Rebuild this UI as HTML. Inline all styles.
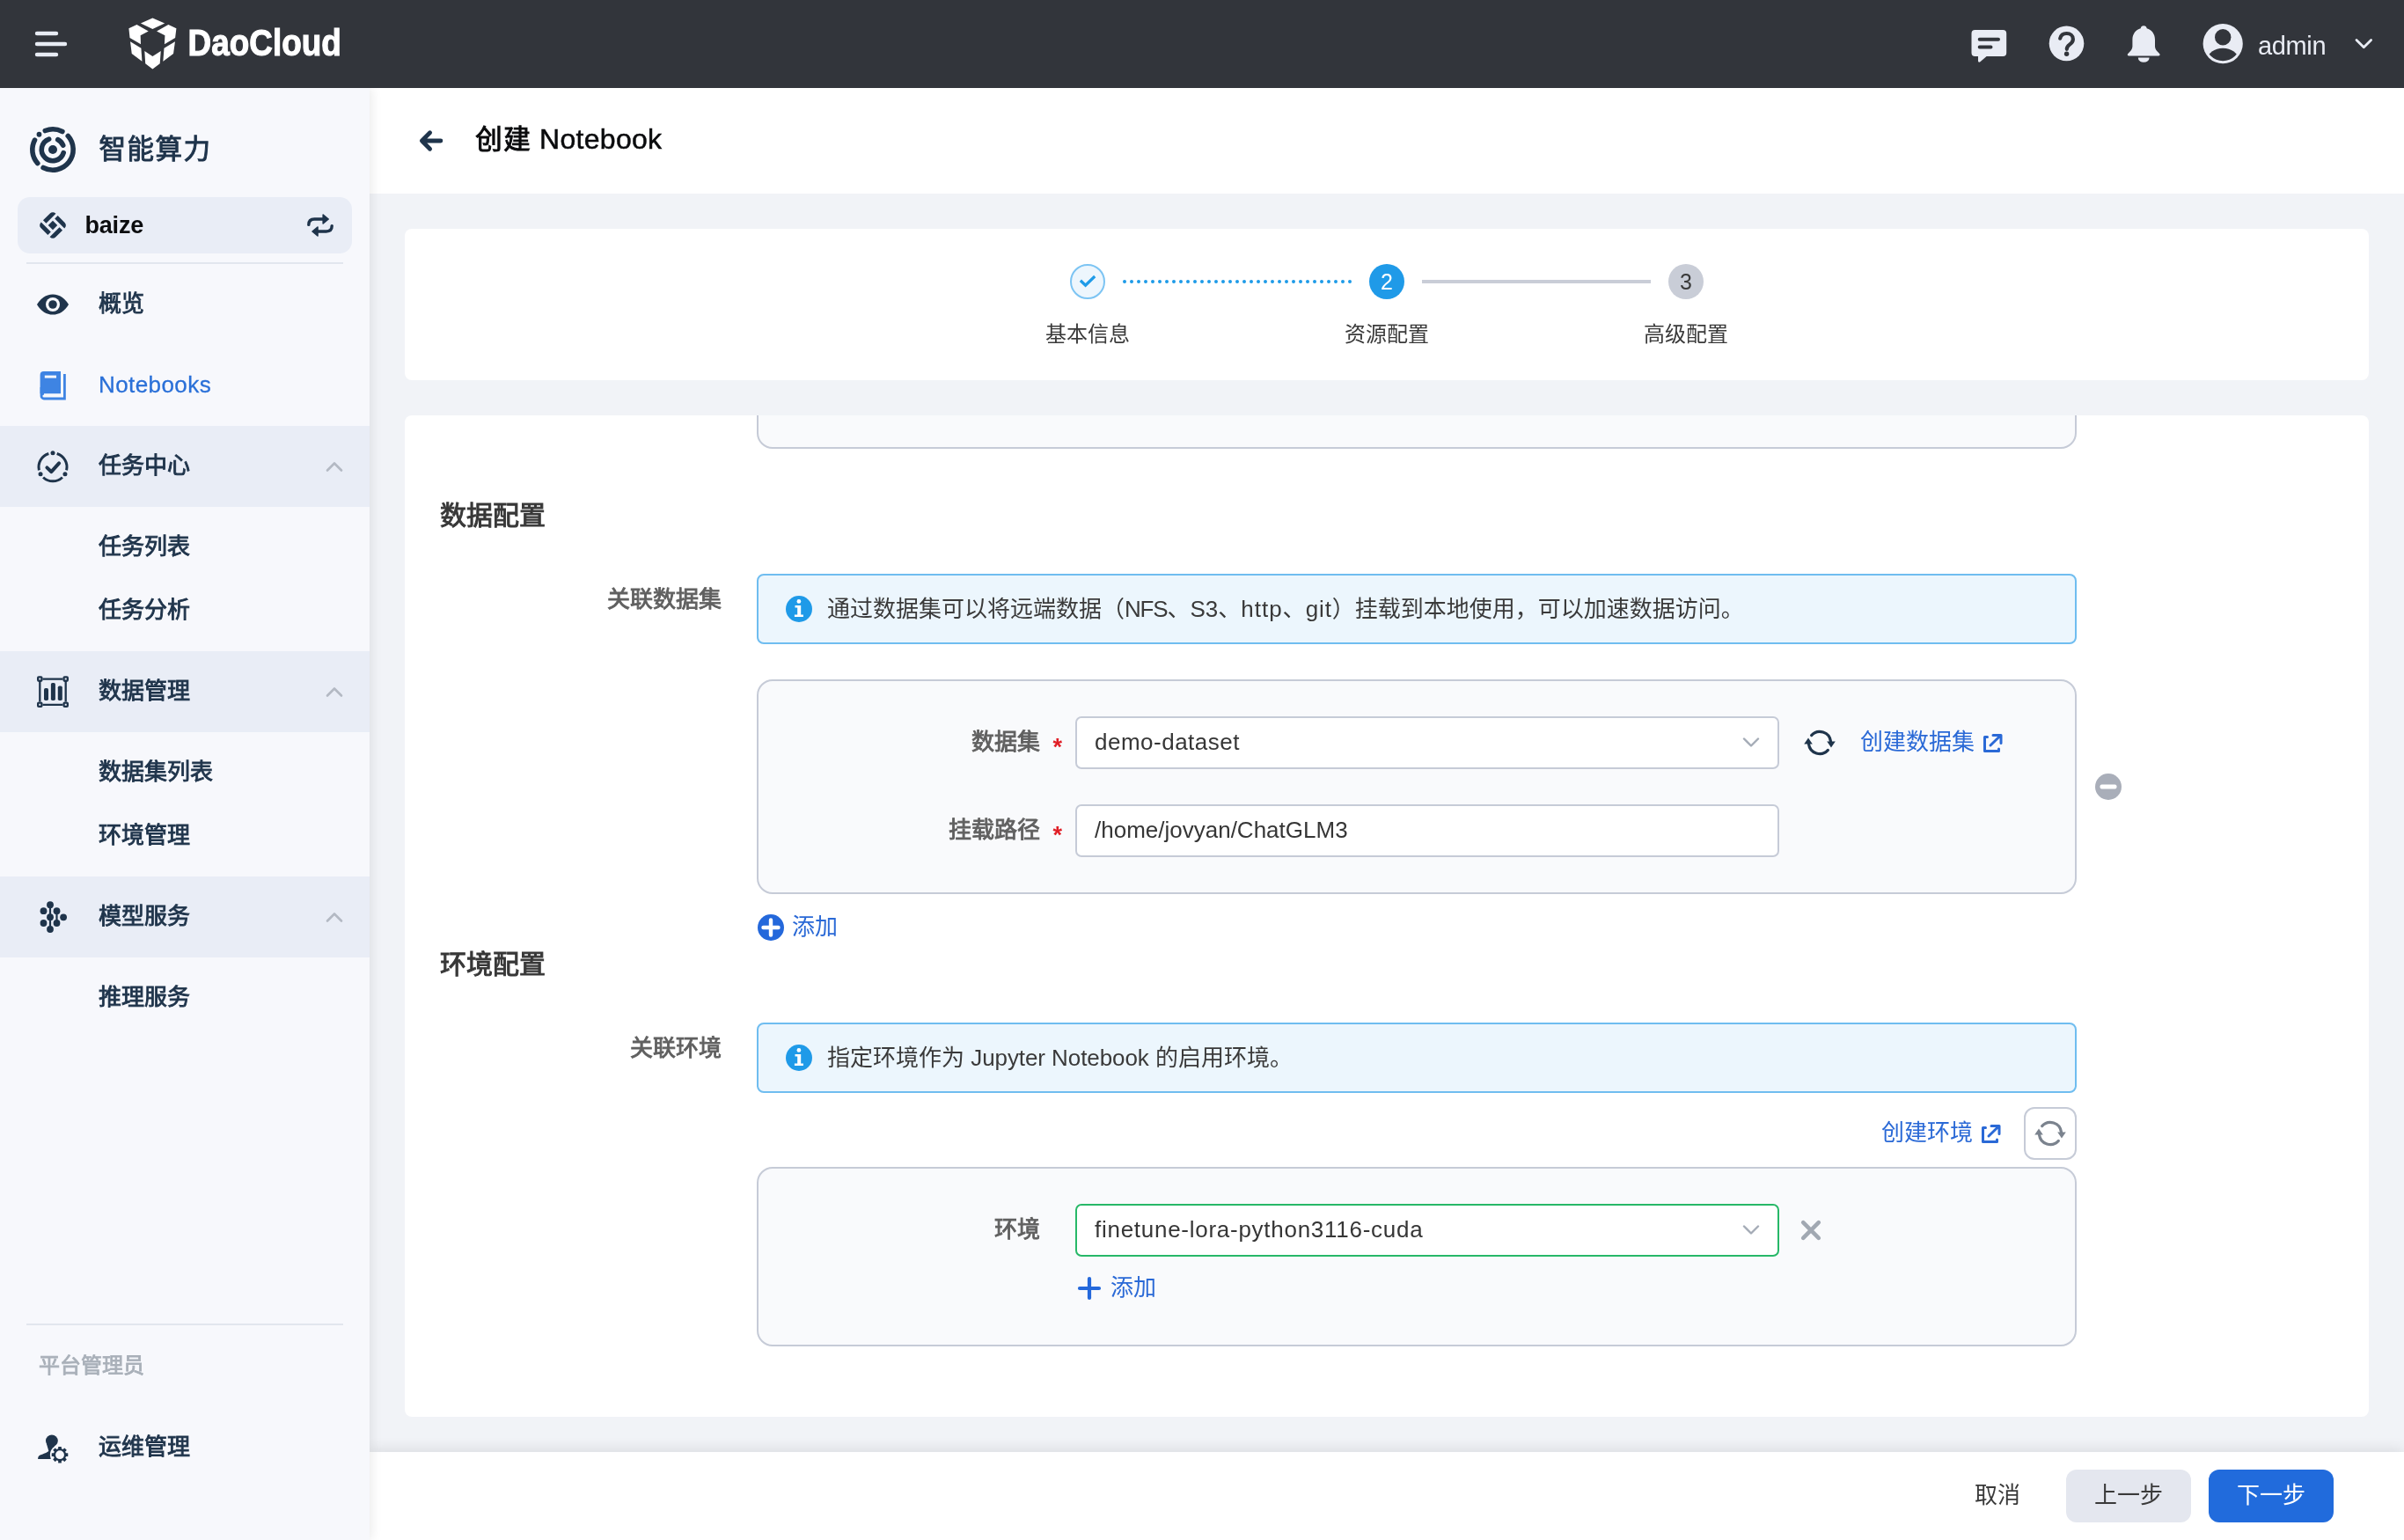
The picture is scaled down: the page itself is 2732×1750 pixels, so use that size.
<!DOCTYPE html>
<html lang="zh-CN"><head><meta charset="utf-8"><title>创建 Notebook</title>
<style>
*{box-sizing:border-box;margin:0;padding:0}
html,body{width:2732px;height:1750px;overflow:hidden}
body{position:relative;background:#f1f3f7;font-family:"Liberation Sans","Noto Sans CJK SC",sans-serif;color:#3a3a3a;font-size:26px}
.abs{position:absolute}
#header,#sidebar,#titlebar,.card,#footer{will-change:transform}
svg{position:absolute;overflow:visible}
.t{position:absolute;white-space:nowrap;line-height:40px;height:40px}
#header{position:absolute;left:0;top:0;width:2732px;height:100px;background:#32353b;z-index:30}
#sidebar{position:absolute;left:0;top:100px;width:420px;height:1650px;background:#f7f8fc;box-shadow:2px 0 12px rgba(0,0,0,.085);z-index:20}
.sec{position:absolute;left:0;width:420px;height:92px;background:#e9edf6}
.mi{font-size:26px;font-weight:400;color:#1f344b;left:112px;-webkit-text-stroke:0.9px #1f344b}
.fb{font-weight:400;-webkit-text-stroke:0.9px currentColor}
#titlebar{position:absolute;left:420px;top:100px;width:2312px;height:120px;background:#fff;z-index:5}
.card{position:absolute;left:460px;width:2232px;background:#fff;border-radius:8px}
.box{position:absolute;left:400px;width:1500px;border:2px solid #c6cbd7;border-radius:18px;background:#f9fafc}
.info{position:absolute;left:400px;width:1500px;height:80px;border:2px solid #6fbdf0;border-radius:8px;background:#ecf6fd}
.inp{position:absolute;left:762px;width:800px;height:60px;border:2px solid #c6cbd7;border-radius:7px;background:#fff}
.lbl{font-weight:400;color:#606060;text-align:right;-webkit-text-stroke:0.9px #606060}
.blue{color:#2a69d6}
#footer{position:absolute;left:420px;top:1650px;width:2312px;height:100px;background:#fff;box-shadow:0 -4px 14px rgba(0,0,0,.085);z-index:10}
.btn{position:absolute;top:20px;height:60px;border-radius:12px;text-align:center;line-height:58px;font-size:26px}
</style></head><body>

<div id="header">
<svg width="40" height="32" style="left:38px;top:34px" viewBox="38 34 40 32"><g stroke="#e8ecf4" stroke-width="4.4" stroke-linecap="round"><path d="M42 38H64M42 50H74M42 62H64"/></g></svg>
<svg width="80" height="80" style="left:136px;top:10px" viewBox="0 0 1540 1540"><g fill="#fff"><polygon points="720,200 985,320 720,445 460,320"/><polygon points="200,430 375,345 630,490 455,580 462,775 222,635"/><polygon points="1240,430 1065,345 810,490 990,580 980,775 1215,635"/><polygon points="232,715 470,860 490,1150 265,980"/><polygon points="1212,715 972,860 950,1150 1175,980"/><polygon points="545,925 720,1040 900,925 880,1200 720,1320 562,1200"/></g></svg>
<svg width="180" height="60" style="left:212px;top:20px"><text x="1.600" y="42.500" font-family="Liberation Sans, sans-serif" font-weight="700" font-size="42.500" fill="#fff" stroke="#fff" stroke-width="1.100" textLength="174.300" lengthAdjust="spacingAndGlyphs">DaoCloud</text></svg>
<svg width="44" height="44" style="left:2238px;top:30px" viewBox="2238 30 44 44"><path fill="#e9ecf4" d="M2244.5 34h31.7a4 4 0 0 1 4 4v22a4 4 0 0 1-4 4h-18.6l-7.2 6.2c-1.2 1-2.4.4-2.4-1.1V64h-3.5a4 4 0 0 1-4-4V38a4 4 0 0 1 4-4z"/><g stroke="#32353b" stroke-width="4" stroke-linecap="round"><path d="M2249.7 44.7H2271M2249.7 53.4H2262.5"/></g></svg>
<svg width="44" height="44" style="left:2326px;top:27px" viewBox="2326 27 44 44"><circle cx="2348.5" cy="49.4" r="19.8" fill="#e9ecf4"/><path d="M2341.2 43.6c.8-3.6 3.6-5.6 7.4-5.6 4.2 0 7.3 2.700 7.300 6.400 0 2.900-1.600 4.500-3.900 6.200-2 1.500-3.200 2.600-3.200 5.200" fill="none" stroke="#32353b" stroke-width="4.200" stroke-linecap="round" stroke-linejoin="round"/><circle cx="2348.600" cy="61.300" r="2.700" fill="#32353b"/></svg>
<svg width="44" height="48" style="left:2414px;top:26px" viewBox="2414 26 44 48"><path fill="#e9ecf4" d="M2436.2 29.200c1.900 0 3.300 1.300 3.500 3 5.600 1.500 9.300 6.500 9.300 12.800v7.500c0 2.200.9 4.200 2.500 5.800l2.600 2.600c1.100 1.100.3 2.600-1.100 2.600h-33.600c-1.400 0-2.200-1.500-1.100-2.600l2.600-2.600c1.600-1.600 2.500-3.600 2.500-5.800V45c0-6.300 3.700-11.300 9.300-12.800.2-1.700 1.600-3 3.500-3z"/><path fill="#e9ecf4" d="M2429.8 65.400h12.800a6.400 5.400 0 0 1-12.800 0z"/></svg>
<svg width="50" height="50" style="left:2501px;top:25px" viewBox="2501 25 50 50"><defs><clipPath id="avc"><circle cx="2526.200" cy="49.7" r="19.6"/></clipPath></defs><circle cx="2526.200" cy="49.700" r="22.600" fill="#e9ecf4"/><circle cx="2526.200" cy="42.300" r="9.200" fill="#32353b"/><ellipse cx="2526.200" cy="68" rx="17.500" ry="13.300" fill="#32353b" clip-path="url(#avc)"/></svg>
<div class="t" style="left:2566px;top:32px;letter-spacing:-0.350px;color:#e9ecf4;font-size:29px;font-weight:400">admin</div>
<svg width="24" height="16" style="left:2674px;top:42px" viewBox="2674 42 24 16"><path d="M2678 45.500l8.300 8.300 8.300-8.300" fill="none" stroke="#e9ecf4" stroke-width="2.800" stroke-linecap="round" stroke-linejoin="round"/></svg>
</div>
<div id="sidebar">
<svg width="60" height="60" style="left:30px;top:39.5px" viewBox="30 39.5 60 60"><g fill="none" stroke="#1f344b" stroke-width="5.6" stroke-linecap="round"><path d="M51.31 47.99A23.2 23.2 0 0 1 70.89 49.02 M77.24 53.98A23.2 23.2 0 0 1 49.11 89.98 M42.76 85.02A23.2 23.2 0 0 1 39.52 58.61"/><path d="M65.67 58.13A12.7 12.7 0 0 1 71.72 64.60 M72.17 73.13A12.7 12.7 0 1 1 55.66 57.57"/></g><circle cx="60" cy="69.5" r="5" fill="#1f344b"/><circle cx="44.48" cy="52.26" r="2.9" fill="#1f344b"/></svg>
<div class="t" style="left:112.500px;top:49px;font-size:30.500px;letter-spacing:1.500px;font-weight:400;color:#1f344b;-webkit-text-stroke:1px #1f344b">智能算力</div>
<div class="abs" style="left:20px;top:124px;width:380px;height:64px;border-radius:14px;background:#e9edf6"></div>
<svg width="40" height="40" style="left:40px;top:135.8px" viewBox="-20 -20 40 40"><g transform="rotate(45)" fill="#1f344b"><path d="M-7.4 -11.8H-6.9V3.8000000000000003H-11.8V-7.4A4.4 4.4 0 0 1 -7.4 -11.8z" transform="rotate(0)"/><path d="M-7.4 -11.8H-6.9V3.8000000000000003H-11.8V-7.4A4.4 4.4 0 0 1 -7.4 -11.8z" transform="rotate(90)"/><path d="M-7.4 -11.8H-6.9V3.8000000000000003H-11.8V-7.4A4.4 4.4 0 0 1 -7.4 -11.8z" transform="rotate(180)"/><path d="M-7.4 -11.8H-6.9V3.8000000000000003H-11.8V-7.4A4.4 4.4 0 0 1 -7.4 -11.8z" transform="rotate(270)"/><rect x="-3.700" y="-3.700" width="7.400" height="7.400"/></g></svg>
<div class="t" style="left:96.500px;top:136px;font-size:27px;letter-spacing:-0.200px;font-weight:700;color:#0c0d0f">baize</div>
<svg width="36" height="32" style="left:346px;top:140px" viewBox="346 240 36 32"><g fill="none" stroke="#1f344b" stroke-width="3.400" stroke-linecap="round"><path d="M350.800 255.400c0-4.400 2.400-6.400 6.500-6.400h9.500"/><path d="M377.200 256.600c0 4.400-2.400 6.400-6.500 6.400h-9.500"/></g><g fill="#1f344b" stroke="#1f344b" stroke-width="1.600" stroke-linejoin="round"><path d="M367.200 244.100l6 4.900-6 4.900z"/><path d="M361 258.100l-6 4.900 6 4.900z"/></g></svg>
<div class="abs" style="left:30px;top:198px;width:360px;height:2px;background:#e2e6ee"></div>
<svg width="40" height="28" style="left:40px;top:232px" viewBox="40 332 40 28"><path fill="#1f344b" d="M42 346c4.500-7.600 10.800-11.600 18-11.600s13.500 4 18 11.600c-4.500 7.600-10.800 11.600-18 11.600s-13.500-4-18-11.600z"/><circle cx="60" cy="346" r="8" fill="#f7f8fc"/><circle cx="60" cy="346" r="4.800" fill="#1f344b"/></svg>
<div class="t mi" style="top:225px">概览</div>
<svg width="34" height="36" style="left:44px;top:320px" viewBox="44 420 34 36"><path fill="#3e84e3" d="M49.600 422h19.400v25.200h-23.400v-21.200a4 4 0 0 1 4-4z"/><rect x="50.800" y="426.600" width="13.200" height="3" fill="#f7f8fc"/><path d="M73.400 425v28H50a3 3 0 0 1 0-6M47 440V450" fill="none" stroke="#3e84e3" stroke-width="2.800"/></svg>
<div class="t" style="left:112px;top:317px;font-size:26px;letter-spacing:0.420px;color:#2a70d8;-webkit-text-stroke:0.300px #2a70d8">Notebooks</div>
<div class="sec" style="top:384px"></div>
<svg width="40" height="40" style="left:40px;top:411px" viewBox="40 511 40 40"><path d="M64.68 515.50A16 16 0 0 1 75.59 534.40 M70.91 542.50A16 16 0 0 1 49.09 542.50 M44.41 534.40A16 16 0 0 1 55.32 515.50" fill="none" stroke="#1f344b" stroke-width="3"/><circle cx="60.00" cy="514.70" r="2.500" fill="#1f344b"/><circle cx="73.94" cy="538.85" r="2.500" fill="#1f344b"/><circle cx="46.06" cy="538.85" r="2.500" fill="#1f344b"/><path d="M53.400 531.300l4.900 4.900 8.800-9.800" fill="none" stroke="#1f344b" stroke-width="4" stroke-linecap="round" stroke-linejoin="round"/></svg>
<div class="t mi" style="top:409px">任务中心</div>
<svg width="24" height="16" style="left:368px;top:422px" viewBox="-12 -8 24 16"><path d="M-8 4.500l8-8 8 8" fill="none" stroke="#b3b9c3" stroke-width="2.600" stroke-linecap="round" stroke-linejoin="round"/></svg>
<div class="t mi" style="top:501px">任务列表</div>
<div class="t mi" style="top:573px">任务分析</div>
<div class="sec" style="top:640px"></div>
<svg width="40" height="40" style="left:40px;top:666px" viewBox="40 766 40 40"><g fill="none" stroke="#1f344b" stroke-width="2.300"><path d="M48.600 771.600H71.400M48.600 800.800H71.400M45.300 774.900V797.500M74.700 774.900V797.500"/><rect x="43.15" y="769.45" width="4.300" height="4.300" rx="0.900"/><rect x="43.15" y="798.65" width="4.300" height="4.300" rx="0.900"/><rect x="72.55" y="769.45" width="4.300" height="4.300" rx="0.900"/><rect x="72.55" y="798.65" width="4.300" height="4.300" rx="0.900"/></g><g fill="#1f344b"><rect x="50" y="782" width="5" height="14" rx="1.700"/><rect x="57.900" y="776" width="5" height="20" rx="1.700"/><rect x="65.800" y="779.600" width="5" height="16.400" rx="1.700"/></g></svg>
<div class="t mi" style="top:665px">数据管理</div>
<svg width="24" height="16" style="left:368px;top:678px" viewBox="-12 -8 24 16"><path d="M-8 4.500l8-8 8 8" fill="none" stroke="#b3b9c3" stroke-width="2.600" stroke-linecap="round" stroke-linejoin="round"/></svg>
<div class="t mi" style="top:757px">数据集列表</div>
<div class="t mi" style="top:829px">环境管理</div>
<div class="sec" style="top:896px"></div>
<svg width="40" height="40" style="left:40px;top:922px" viewBox="40 1022 40 40"><g fill="#1f344b"><circle cx="57" cy="1028.2" r="3.900"/><circle cx="57" cy="1042.2" r="3.900"/><circle cx="57" cy="1056" r="3.900"/><circle cx="49.5" cy="1035.2" r="3.900"/><circle cx="49.5" cy="1049" r="3.900"/><circle cx="64.5" cy="1035.2" r="3.900"/><circle cx="64.5" cy="1049" r="3.900"/><circle cx="72.1" cy="1042.3" r="3.900"/></g><path d="M57 1028V1056M64.500 1035V1049" stroke="#1f344b" stroke-width="2.200"/></svg>
<div class="t mi" style="top:921px">模型服务</div>
<svg width="24" height="16" style="left:368px;top:934px" viewBox="-12 -8 24 16"><path d="M-8 4.500l8-8 8 8" fill="none" stroke="#b3b9c3" stroke-width="2.600" stroke-linecap="round" stroke-linejoin="round"/></svg>
<div class="t mi" style="top:1013px">推理服务</div>
<div class="abs" style="left:30px;top:1404px;width:360px;height:2px;background:#e2e6ee"></div>
<div class="t" style="left:44px;top:1432px;font-size:24px;font-weight:400;color:#a9b0b9;-webkit-text-stroke:0.85px #a9b0b9">平台管理员</div>
<svg width="44" height="44" style="left:40px;top:1524px" viewBox="40 1624 44 44"><g fill="#1f344b"><ellipse cx="58.900" cy="1637.200" rx="6.900" ry="6.700"/><path d="M53 1641L55.300 1648.700C54 1650.600 49.500 1652 45.600 1653.400C43.800 1654.300 43.100 1655.600 43.100 1657.900H62V1641z"/></g><circle cx="68.0" cy="1653.2" r="11.100" fill="#f7f8fc"/><g transform="translate(68.0 1653.2)" fill="#1f344b"><rect x="-1.850" y="-9.300" width="3.700" height="3.600" rx="0.500" transform="rotate(0)"/><rect x="-1.850" y="-9.300" width="3.700" height="3.600" rx="0.500" transform="rotate(45)"/><rect x="-1.850" y="-9.300" width="3.700" height="3.600" rx="0.500" transform="rotate(90)"/><rect x="-1.850" y="-9.300" width="3.700" height="3.600" rx="0.500" transform="rotate(135)"/><rect x="-1.850" y="-9.300" width="3.700" height="3.600" rx="0.500" transform="rotate(180)"/><rect x="-1.850" y="-9.300" width="3.700" height="3.600" rx="0.500" transform="rotate(225)"/><rect x="-1.850" y="-9.300" width="3.700" height="3.600" rx="0.500" transform="rotate(270)"/><rect x="-1.850" y="-9.300" width="3.700" height="3.600" rx="0.500" transform="rotate(315)"/><circle r="7.200"/><circle r="4.900" fill="#f7f8fc"/></g></svg>
<div class="t mi" style="top:1524px">运维管理</div>
</div>
<div id="titlebar">
<svg width="36" height="32" style="left:52px;top:44px" viewBox="472 144 36 32"><path d="M500.900 160H479.500M488.600 150.800L479.400 160 488.600 169.200" fill="none" stroke="#1f344b" stroke-width="4.800" stroke-linecap="round" stroke-linejoin="round"/></svg>
<div class="t" style="left:120.300px;top:37.500px;font-size:30.500px;letter-spacing:1.500px;font-weight:400;color:#0a0b0d;-webkit-text-stroke:1px #0a0b0d">创建</div>
<div class="t" style="left:193px;top:38px;font-size:32px;letter-spacing:0.300px;font-weight:400;color:#0a0b0d;-webkit-text-stroke:0.500px #0a0b0d">Notebook</div>
</div>
<div class="card" style="top:260px;height:172px">
<div class="abs" style="left:756px;top:40px;width:40px;height:40px;border-radius:50%;border:2px solid #7cc4f3;background:#edf6fd"></div>
<svg width="24" height="20" style="left:764px;top:50px" viewBox="-12 -10 24 20"><path d="M-8.100 -1.250L-2.400 4.200L8.200 -6" fill="none" stroke="#1e9be8" stroke-width="3.200" stroke-linecap="butt" stroke-linejoin="miter"/></svg>
<svg width="264" height="8" style="left:814px;top:56px" viewBox="0 0 264 8"><path d="M4 4H262" stroke="#1e9be8" stroke-width="4" stroke-linecap="round" stroke-dasharray="0 8"/></svg>
<div class="abs" style="left:1096px;top:40px;width:40px;height:40px;border-radius:50%;background:#1f9ae8;color:#fff;text-align:center;line-height:40px;font-size:25px">2</div>
<div class="abs" style="left:1156px;top:58px;width:260px;height:4px;background:#c9cdd7"></div>
<div class="abs" style="left:1436px;top:40px;width:40px;height:40px;border-radius:50%;background:#c9cdd7;color:#3a3a3a;text-align:center;line-height:40px;font-size:25px">3</div>
<div class="t" style="left:676px;width:200px;text-align:center;top:100px;font-size:24px;color:#3a3a3a">基本信息</div>
<div class="t" style="left:1016px;width:200px;text-align:center;top:100px;font-size:24px;color:#3a3a3a">资源配置</div>
<div class="t" style="left:1356px;width:200px;text-align:center;top:100px;font-size:24px;color:#3a3a3a">高级配置</div>
</div>
<div class="card" style="top:472px;height:1138px;overflow:hidden">
<div class="box" style="top:-60px;height:98px"></div>
<div class="t" style="left:40px;top:94px;font-size:30px;font-weight:400;color:#383838;-webkit-text-stroke:1px #383838">数据配置</div>
<div class="t lbl" style="left:100px;width:260px;top:189px">关联数据集</div>
<div class="info" style="top:180px"></div>
<svg width="32" height="32" style="left:432px;top:204px" viewBox="-16 -16 32 32"><circle r="15" fill="#1f9ae8"/><circle cx="-0.100" cy="-8.600" r="2.350" fill="#fff"/><path d="M-4.500 -3.900h6.700v10.500h2.700v2.300h-10v-2.300h3.300v-8.200h-2.700z" fill="#fff"/></svg>
<div class="t" style="left:480px;top:200px;color:#3a3a3a">通过数据集可以将远端数据（<span style="letter-spacing:-1.200px">NFS</span>、S3、<span style="letter-spacing:1px">http</span>、<span style="letter-spacing:0.900px">git</span>）挂载到本地使用，可以加速数据访问。</div>
<div class="box" style="top:300px;height:244px"></div>
<div class="t lbl" style="left:462px;width:260px;top:351px">数据集</div>
<div class="t" style="left:736.5px;top:357px;color:#e01e26;font-weight:700;font-size:27px;font-family:'Liberation Sans',sans-serif">*</div>
<div class="inp" style="top:342px"></div>
<div class="t" style="left:784px;top:351px;font-size:26px;letter-spacing:0.500px;color:#363636">demo-dataset</div>
<svg width="24" height="16" style="left:1518px;top:364px" viewBox="-12 -8 24 16"><path d="M-8 -4.500l8 8 8-8" fill="none" stroke="#a4abb6" stroke-width="2.400" stroke-linecap="round" stroke-linejoin="round"/></svg>
<svg width="40" height="40" style="left:1588px;top:352px" viewBox="-20 -20 40 40"><g fill="none" stroke="#1f344b" stroke-width="3.200" stroke-linecap="round"><path d="M-9.36 -8.43A12.6 12.6 0 0 1 12.51 -1.54"/><path d="M9.36 8.43A12.6 12.6 0 0 1 -12.51 1.54"/></g><g fill="#1f344b"><path d="M8.200 -1.600h9.600l-4.800 7.200z"/><path d="M-8.200 1.600h-9.600l4.800-7.200z"/></g></svg>
<div class="t blue" style="left:1654px;top:351px">创建数据集</div>
<svg width="26" height="26" style="left:1792px;top:360px" viewBox="0 0 26 26"><g fill="none" stroke="#2a69d6" stroke-width="3" stroke-linecap="round" stroke-linejoin="round"><path d="M6.500 5.500H3.500V21.500H19.500V19"/><path d="M10 15L21.500 3.800M13 3.500H22V12.500"/></g></svg>
<div class="t lbl" style="left:462px;width:260px;top:451px">挂载路径</div>
<div class="t" style="left:736.5px;top:457px;color:#e01e26;font-weight:700;font-size:27px;font-family:'Liberation Sans',sans-serif">*</div>
<div class="inp" style="top:442px"></div>
<div class="t" style="left:784px;top:451px;font-size:26px;color:#363636">/home/jovyan/ChatGLM3</div>
<svg width="32" height="32" style="left:1920px;top:406px" viewBox="-16 -16 32 32"><circle r="15" fill="#a9aeb9"/><rect x="-9.500" y="-2.500" width="19" height="5" rx="2" fill="#fff"/></svg>
<svg width="32" height="32" style="left:400px;top:566px" viewBox="-16 -16 32 32"><circle r="15" fill="#2468db"/><path d="M-8.500 0H8.500M0 -8.500V8.500" stroke="#fff" stroke-width="4.400" stroke-linecap="round"/></svg>
<div class="t blue" style="left:440px;top:561px">添加</div>
<div class="t" style="left:40px;top:604px;font-size:30px;font-weight:400;color:#383838;-webkit-text-stroke:1px #383838">环境配置</div>
<div class="t lbl" style="left:100px;width:260px;top:699px">关联环境</div>
<div class="info" style="top:690px"></div>
<svg width="32" height="32" style="left:432px;top:714px" viewBox="-16 -16 32 32"><circle r="15" fill="#1f9ae8"/><circle cx="-0.100" cy="-8.600" r="2.350" fill="#fff"/><path d="M-4.500 -3.900h6.700v10.500h2.700v2.300h-10v-2.300h3.300v-8.200h-2.700z" fill="#fff"/></svg>
<div class="t" style="left:480px;top:710px;color:#3a3a3a">指定环境作为 <span style="letter-spacing:-0.080px">Jupyter Notebook</span> 的启用环境。</div>
<div class="t blue" style="left:1678px;top:795px">创建环境</div>
<svg width="26" height="26" style="left:1790px;top:804px" viewBox="0 0 26 26"><g fill="none" stroke="#2a69d6" stroke-width="3" stroke-linecap="round" stroke-linejoin="round"><path d="M6.500 5.500H3.500V21.500H19.500V19"/><path d="M10 15L21.500 3.800M13 3.500H22V12.500"/></g></svg>
<div class="abs" style="left:1840px;top:786px;width:60px;height:60px;border:2px solid #c6cbd7;border-radius:12px;background:#fff"></div>
<svg width="40" height="40" style="left:1850px;top:796px" viewBox="-20 -20 40 40"><g fill="none" stroke="#7b838e" stroke-width="3.200" stroke-linecap="round"><path d="M-9.36 -8.43A12.6 12.6 0 0 1 12.51 -1.54"/><path d="M9.36 8.43A12.6 12.6 0 0 1 -12.51 1.54"/></g><g fill="#7b838e"><path d="M8.200 -1.600h9.600l-4.800 7.200z"/><path d="M-8.200 1.600h-9.600l4.800-7.200z"/></g></svg>
<div class="box" style="top:854px;height:204px"></div>
<div class="t lbl" style="left:462px;width:260px;top:905px">环境</div>
<div class="inp" style="top:896px;border-color:#27b868"></div>
<div class="t" style="left:784px;top:905px;font-size:26px;color:#363636;letter-spacing:0.730px">finetune-lora-python3116-cuda</div>
<svg width="24" height="16" style="left:1518px;top:918px" viewBox="-12 -8 24 16"><path d="M-8 -4.500l8 8 8-8" fill="none" stroke="#a4abb6" stroke-width="2.400" stroke-linecap="round" stroke-linejoin="round"/></svg>
<svg width="28" height="28" style="left:1584px;top:912px" viewBox="-14 -14 28 28"><path d="M-8.800 -8.800L8.800 8.800M8.800 -8.800L-8.800 8.800" stroke="#a1a8b2" stroke-width="4.600" stroke-linecap="round"/></svg>
<svg width="30" height="30" style="left:763px;top:977px" viewBox="-15 -15 30 30"><path d="M-11 0H11M0 -11V11" stroke="#2468db" stroke-width="4.200" stroke-linecap="round"/></svg>
<div class="t blue" style="left:802px;top:971px">添加</div>
</div>
<div id="footer">
<div class="btn" style="left:1792px;width:116px;color:#3a3a3a">取消</div>
<div class="btn" style="left:1928px;width:142px;background:#e4e7ef;color:#3a3a3a">上一步</div>
<div class="btn" style="left:2090px;width:142px;background:#216bdc;color:#fff">下一步</div>
</div>
</body></html>
